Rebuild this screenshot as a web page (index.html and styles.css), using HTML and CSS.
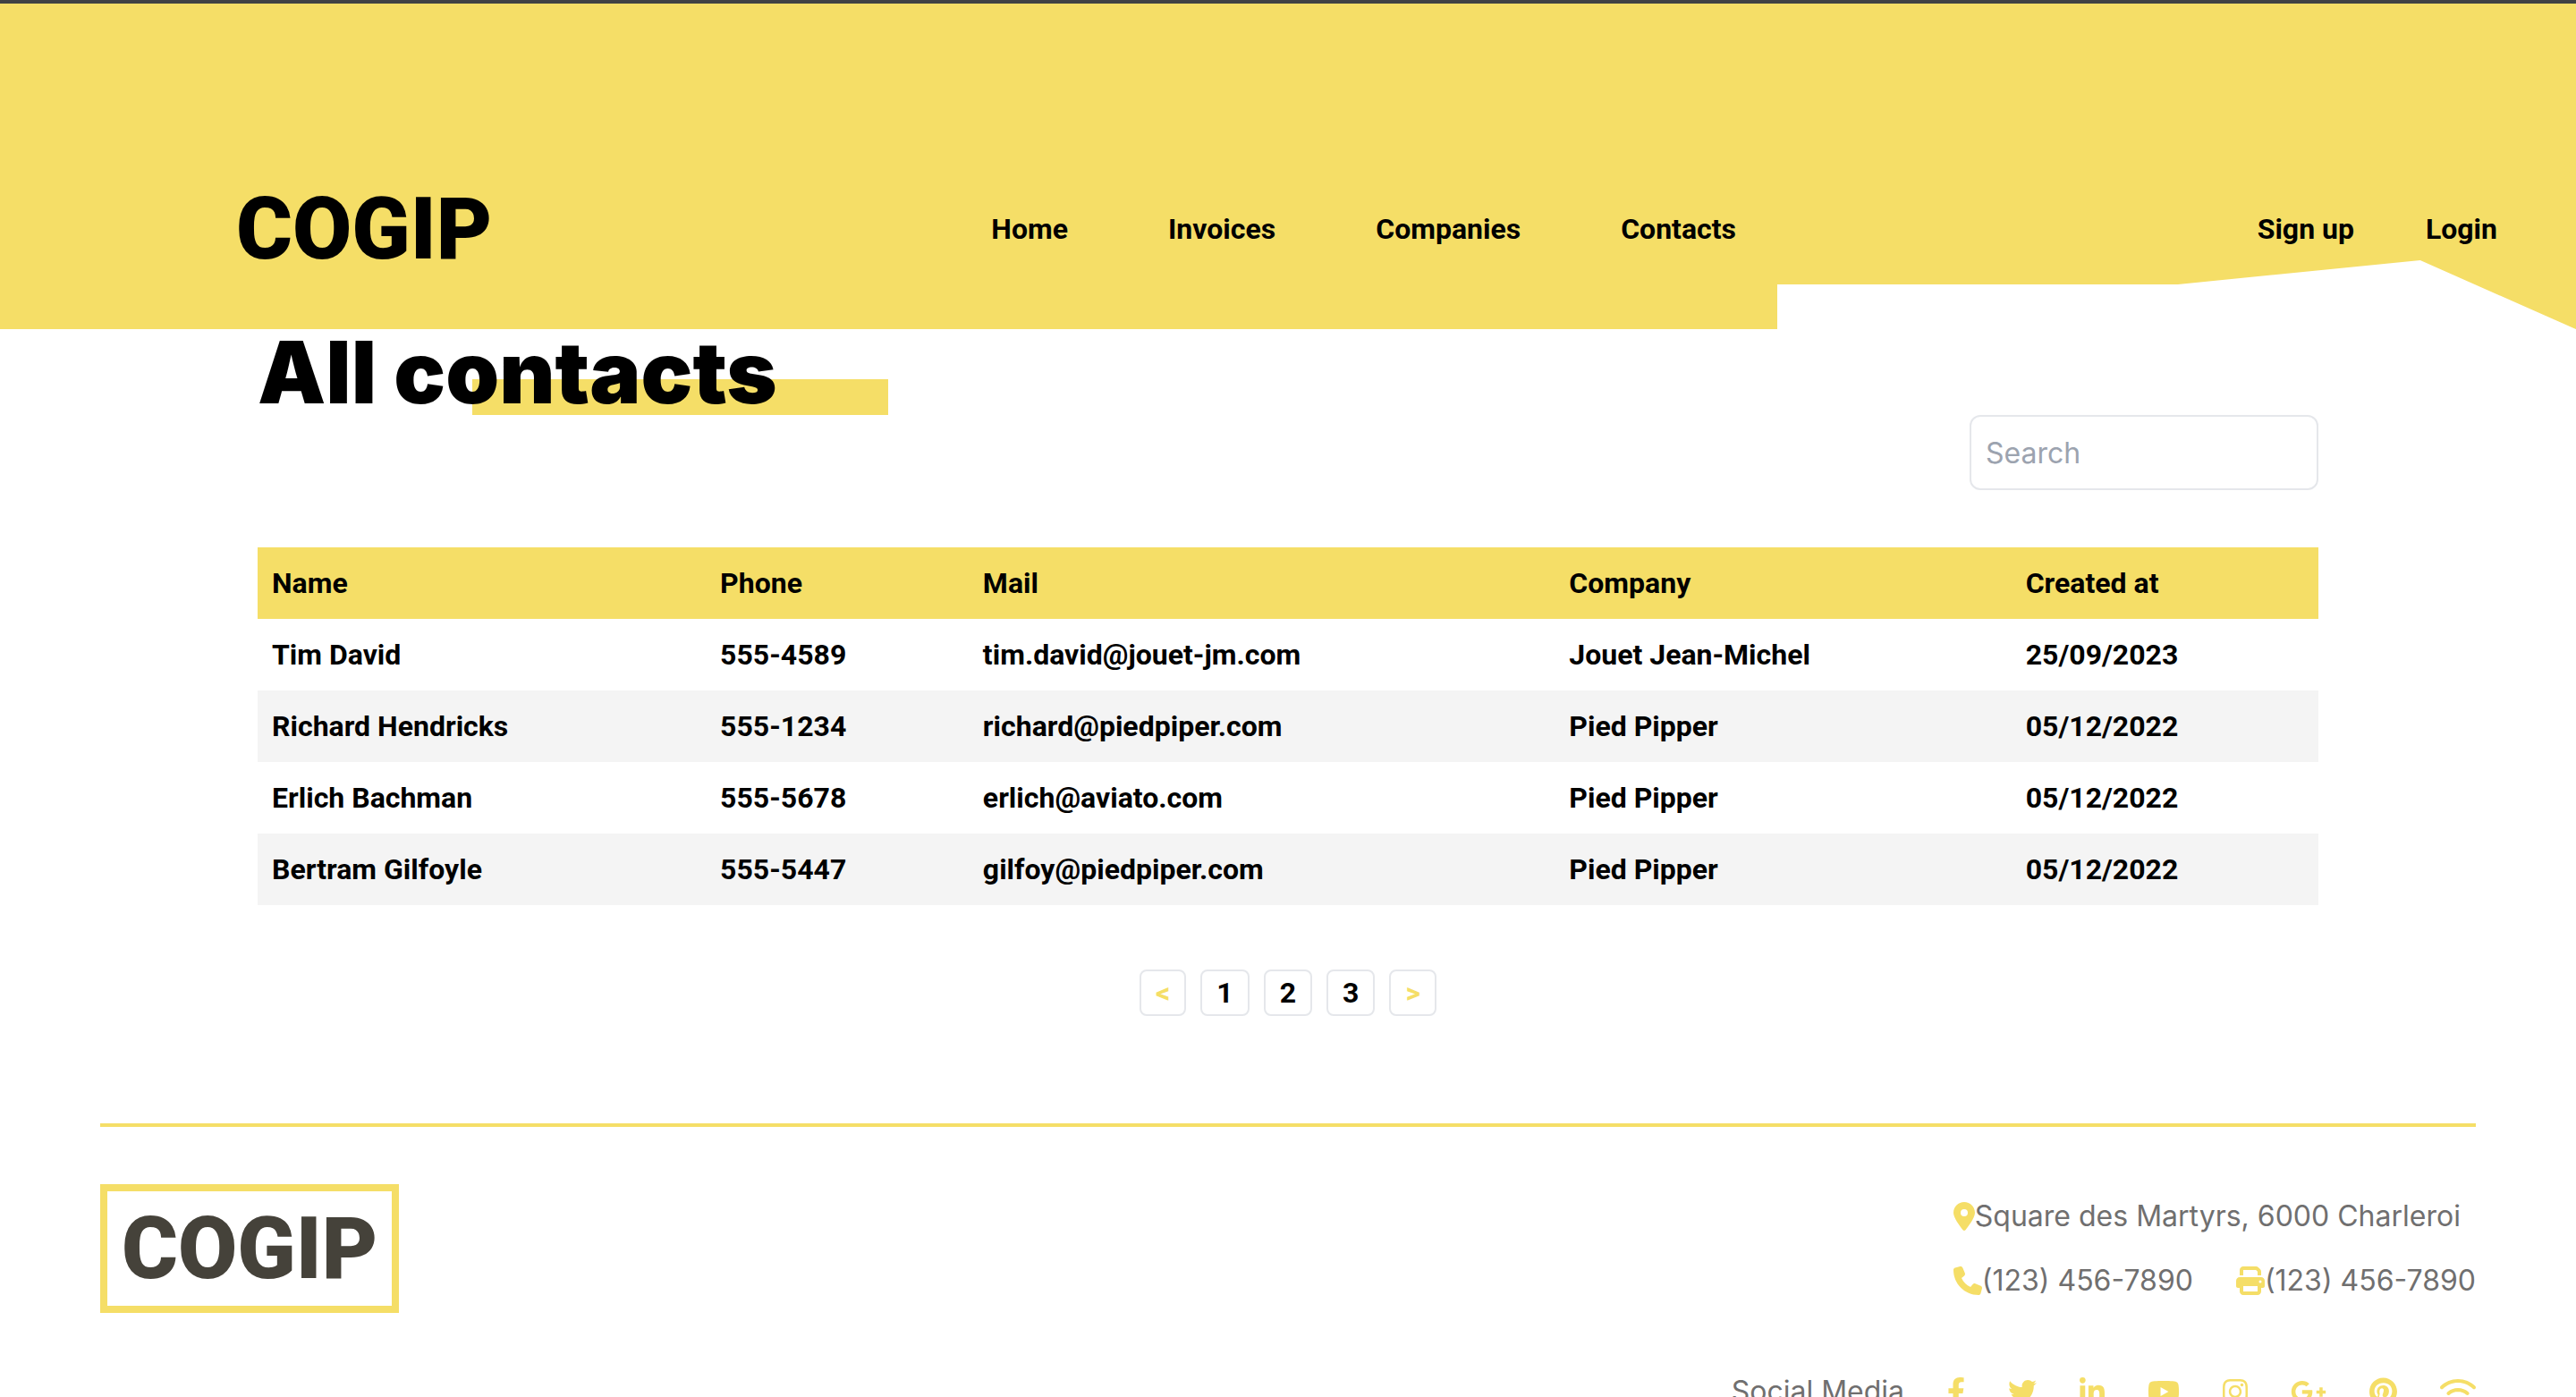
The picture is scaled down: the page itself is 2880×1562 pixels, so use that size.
FILE: index.html
```html
<!DOCTYPE html>
<html lang="en">
<head>
<meta charset="utf-8">
<title>COGIP - All contacts</title>
<link rel="stylesheet" href="styles.css">
</head>
<body>
<header class="header">
  <svg class="header-shape" viewBox="0 0 893 77" preserveAspectRatio="none" aria-hidden="true"><path fill="#fff" d="M0 27H448L719 0 893 77H0z"/></svg>
  <a class="brand" href="#">COGIP</a>
  <nav class="menu">
    <a href="#">Home</a>
    <a href="#">Invoices</a>
    <a href="#">Companies</a>
    <a href="#">Contacts</a>
  </nav>
  <nav class="account">
    <a href="#">Sign up</a>
    <a href="#">Login</a>
  </nav>
</header>
<main class="content">
  <h1 class="title">All contacts</h1>
  <div class="search-row">
    <input class="search" type="search" placeholder="Search" aria-label="Search">
  </div>
  <table class="contacts">
    <colgroup><col class="col-name"><col class="col-phone"><col class="col-mail"><col class="col-company"><col class="col-date"></colgroup>
    <thead>
      <tr><th>Name</th><th>Phone</th><th>Mail</th><th>Company</th><th>Created at</th></tr>
    </thead>
    <tbody>
      <tr><td>Tim David</td><td>555-4589</td><td>tim.david@jouet-jm.com</td><td>Jouet Jean-Michel</td><td>25/09/2023</td></tr>
      <tr><td>Richard Hendricks</td><td>555-1234</td><td>richard@piedpiper.com</td><td>Pied Pipper</td><td>05/12/2022</td></tr>
      <tr><td>Erlich Bachman</td><td>555-5678</td><td>erlich@aviato.com</td><td>Pied Pipper</td><td>05/12/2022</td></tr>
      <tr><td>Bertram Gilfoyle</td><td>555-5447</td><td>gilfoy@piedpiper.com</td><td>Pied Pipper</td><td>05/12/2022</td></tr>
    </tbody>
  </table>
  <div class="pages">
    <button class="page arrow" type="button">&lt;</button>
    <button class="page" type="button">1</button>
    <button class="page" type="button">2</button>
    <button class="page" type="button">3</button>
    <button class="page arrow" type="button">&gt;</button>
  </div>
</main>
<footer class="footer">
  <div class="footer-top">
    <a class="footer-brand" href="#">COGIP</a>
    <address class="address">
      <span class="item"><svg class="icon" viewBox="0 0 384 512"><path d="M215.700 499.200C267 435 384 279.400 384 192C384 86 298 0 192 0S0 86 0 192c0 87.400 117 243 168.300 307.200c12.300 15.300 35.100 15.300 47.400 0zM192 128a64 64 0 1 1 0 128 64 64 0 1 1 0-128z"/></svg>Square des Martyrs, 6000 Charleroi</span>
      <span class="phones">
        <span class="item"><svg class="icon" viewBox="0 0 512 512"><path d="M164.900 24.600c-7.700-18.600-28-28.500-47.400-23.200l-88 24C12.100 30.200 0 46 0 64C0 311.400 200.600 512 448 512c18 0 33.800-12.100 38.600-29.500l24-88c5.300-19.400-4.600-39.700-23.200-47.400l-96-40c-16.300-6.800-35.200-2.100-46.300 11.600L304.700 368C234.300 334.700 177.300 277.700 144 207.300L193.300 167c13.700-11.200 18.400-30 11.600-46.300l-40-96z"/></svg>(123) 456-7890</span>
        <span class="item"><svg class="icon" viewBox="0 0 512 512"><path d="M128 0C92.700 0 64 28.700 64 64v96h64V64H354.700L384 93.300V160h64V93.300c0-17-6.700-33.300-18.700-45.300L400 18.700C388 6.700 371.700 0 354.700 0H128zM384 352v32 64H128V384 368 352H384zm64 32h32c17.700 0 32-14.300 32-32V256c0-35.300-28.700-64-64-64H64c-35.300 0-64 28.700-64 64v96c0 17.700 14.300 32 32 32H64v64c0 35.300 28.700 64 64 64H384c35.300 0 64-28.700 64-64V384zM432 248a24 24 0 1 1 0 48 24 24 0 1 1 0-48z"/></svg>(123) 456-7890</span>
      </span>
    </address>
  </div>
  <div class="social">
    <span>Social Media</span>
    <a href="#" aria-label="Facebook"><svg class="icon" viewBox="0 0 320 512"><path d="M279.140 288l14.220-92.660h-88.910v-60.130c0-25.350 12.420-50.060 52.240-50.060h40.420V6.260S260.430 0 225.360 0c-73.220 0-121.080 44.380-121.080 124.720v70.620H22.890V288h81.390v224h100.170V288z"/></svg></a>
    <a href="#" aria-label="Twitter"><svg class="icon" viewBox="0 0 512 512"><path d="M459.370 151.716c.325 4.548.325 9.097.325 13.645 0 138.720-105.583 298.558-298.558 298.558-59.452 0-114.680-17.219-161.137-47.106 8.447.974 16.568 1.299 25.340 1.299 49.055 0 94.213-16.568 130.274-44.832-46.132-.975-84.792-31.188-98.112-72.772 6.498.974 12.995 1.624 19.818 1.624 9.421 0 18.843-1.300 27.614-3.573-48.081-9.747-84.143-51.980-84.143-102.985v-1.299c13.969 7.797 30.214 12.670 47.431 13.319-28.264-18.843-46.781-51.005-46.781-87.391 0-19.492 5.197-37.360 14.294-52.954 51.655 63.675 129.300 105.258 216.365 109.807-1.624-7.797-2.599-15.918-2.599-24.040 0-57.828 46.782-104.934 104.934-104.934 30.213 0 57.502 12.670 76.670 33.137 23.715-4.548 46.456-13.320 66.599-25.340-7.798 24.366-24.366 44.833-46.132 57.827 21.117-2.273 41.584-8.122 60.426-16.243-14.292 20.791-32.161 39.308-52.628 54.253z"/></svg></a>
    <a href="#" aria-label="LinkedIn"><svg class="icon" viewBox="0 0 448 512"><path d="M100.280 448H7.400V148.900h92.880zM53.790 108.100C24.090 108.100 0 83.500 0 53.800a53.790 53.790 0 0 1 107.580 0c0 29.700-24.100 54.300-53.790 54.300zM447.900 448h-92.680V302.400c0-34.700-.7-79.200-48.290-79.200-48.290 0-55.690 37.700-55.690 76.700V448h-92.780V148.900h89.080v40.800h1.300c12.400-23.500 42.690-48.300 87.880-48.300 94 0 111.280 61.900 111.280 142.300V448z"/></svg></a>
    <a href="#" aria-label="YouTube"><svg class="icon" viewBox="0 0 576 512"><path d="M549.655 124.083c-6.281-23.650-24.787-42.276-48.284-48.597C458.781 64 288 64 288 64S117.220 64 74.629 75.486c-23.497 6.322-42.003 24.947-48.284 48.597-11.412 42.867-11.412 132.305-11.412 132.305s0 89.438 11.412 132.305c6.281 23.650 24.787 41.500 48.284 47.821C117.220 448 288 448 288 448s170.780 0 213.371-11.486c23.497-6.321 42.003-24.171 48.284-47.821 11.412-42.867 11.412-132.305 11.412-132.305s0-89.438-11.412-132.305zm-317.510 213.508V175.185l142.739 81.205-142.739 81.201z"/></svg></a>
    <a href="#" aria-label="Instagram"><svg class="icon" viewBox="0 0 448 512"><path d="M224.100 141c-63.600 0-114.900 51.300-114.900 114.900s51.300 114.900 114.900 114.900S339 319.500 339 255.900 287.700 141 224.100 141zm0 189.600c-41.100 0-74.700-33.500-74.700-74.700s33.500-74.700 74.700-74.700 74.700 33.500 74.700 74.700-33.600 74.700-74.700 74.700zm146.400-194.300c0 14.900-12 26.800-26.800 26.800-14.900 0-26.800-12-26.800-26.800s12-26.800 26.800-26.800 26.800 12 26.800 26.800zm76.100 27.200c-1.700-35.900-9.900-67.700-36.200-93.900-26.200-26.200-58-34.400-93.900-36.200-37-2.100-147.900-2.100-184.900 0-35.800 1.700-67.600 9.900-93.900 36.100s-34.400 58-36.200 93.900c-2.100 37-2.100 147.900 0 184.900 1.700 35.900 9.900 67.700 36.200 93.900s58 34.400 93.900 36.200c37 2.100 147.900 2.100 184.900 0 35.900-1.700 67.700-9.900 93.900-36.200 26.200-26.200 34.400-58 36.200-93.900 2.100-37 2.100-147.800 0-184.800zM398.800 388c-7.800 19.600-22.900 34.700-42.600 42.600-29.500 11.700-99.500 9-132.100 9s-102.700 2.600-132.100-9c-19.600-7.800-34.700-22.900-42.600-42.600-11.700-29.500-9-99.500-9-132.100s-2.600-102.700 9-132.100c7.800-19.600 22.900-34.700 42.600-42.600 29.500-11.700 99.500-9 132.100-9s102.700-2.600 132.100 9c19.600 7.800 34.700 22.900 42.600 42.600 11.700 29.500 9 99.500 9 132.100s2.700 102.700-9 132.100z"/></svg></a>
    <a href="#" aria-label="Google Plus"><svg class="icon" viewBox="0 0 640 512"><path d="M386.061 228.496c1.834 9.692 3.143 19.384 3.143 31.956C389.204 370.205 315.599 448 204.800 448c-106.084 0-192-85.915-192-192s85.916-192 192-192c51.864 0 95.083 18.859 128.611 50.292l-52.126 50.030c-14.145-13.621-39.028-29.599-76.485-29.599-65.484 0-118.920 54.221-118.920 121.277 0 67.056 53.436 121.277 118.920 121.277 75.961 0 104.513-54.745 108.965-82.773H204.800v-66.009h181.261zm185.406 6.437V179.200h-56.001v55.733h-55.733v56.001h55.733v55.733h56.001v-55.733H627.200v-56.001h-55.733z"/></svg></a>
    <a href="#" aria-label="Pinterest"><svg class="icon" viewBox="0 0 496 512"><path d="M496 256c0 137-111 248-248 248-25.600 0-50.200-3.900-73.400-11.100 10.100-16.500 25.200-43.500 30.800-65 3-11.600 15.400-59 15.400-59 8.100 15.400 31.700 28.500 56.800 28.500 74.800 0 128.700-68.800 128.700-154.300 0-81.900-66.900-143.200-152.900-143.200-107 0-163.900 71.800-163.900 150.100 0 36.400 19.400 81.700 50.300 96.100 4.700 2.200 7.200 1.200 8.300-3.300.8-3.400 5-20.300 6.900-28.100.6-2.500.3-4.700-1.700-7.100-10.100-12.500-18.300-35.300-18.300-56.600 0-54.700 41.400-107.600 112-107.600 60.900 0 103.600 41.500 103.600 100.900 0 67.100-33.900 113.600-78 113.600-24.300 0-42.600-20.100-36.700-44.800 7-29.500 20.500-61.300 20.500-82.600 0-19-10.200-34.900-31.400-34.900-24.900 0-44.900 25.700-44.900 60.200 0 22 7.400 36.800 7.400 36.800s-24.500 103.800-29 123.200c-5 21.400-3 51.600-.9 71.200C65.400 450.900 0 361.100 0 256 0 119 111 8 248 8s248 111 248 248z"/></svg></a>
    <a href="#" aria-label="Wifi"><svg class="icon" viewBox="0 0 640 512"><path d="M54.200 202.900C123.200 136.700 216.800 96 320 96s196.800 40.700 265.800 106.900c12.800 12.200 33 11.800 45.200-.9s11.800-33-.9-45.200C549.700 79.500 440.400 32 320 32S90.300 79.500 9.800 156.700C-2.900 169-3.300 189.200 8.900 202s32.500 13.200 45.200 .9zM320 256c56.800 0 108.600 21.100 148.200 56c13.300 11.700 33.500 10.400 45.200-2.800s10.400-33.500-2.800-45.200C459.800 219.200 393 192 320 192s-139.800 27.200-190.500 72c-13.300 11.700-14.500 31.900-2.800 45.200s31.900 14.500 45.200 2.800c39.500-34.900 91.300-56 148.200-56zm64 160a64 64 0 1 0 -128 0 64 64 0 1 0 128 0z"/></svg></a>
  </div>
</footer>
</body>
</html>
```
FILE: styles.css
```css
* {
  box-sizing: border-box;
}

body {
  margin: 0;
  background: #fff;
  color: #000;
  font-family: Inter, "Liberation Sans", sans-serif;
  font-size: 32px;
  line-height: 48px;
}

a {
  color: inherit;
  text-decoration: none;
}

.header {
  position: relative;
  display: grid;
  grid-template-columns: 33.4% 1fr auto;
  align-items: center;
  height: 368px;
  padding: 140px 88px 0 264px;
  border-top: 4px solid #404244;
  background: #f5de67;
  font-family: Roboto, "Liberation Sans", sans-serif;
  font-weight: 700;
}

.header-shape {
  position: absolute;
  right: 0;
  bottom: 0;
  width: 31%;
  height: 77px;
}

.brand,
.menu,
.account {
  position: relative;
}

.brand,
.footer-brand {
  font-family: Roboto, "Liberation Sans", sans-serif;
  font-size: 96px;
  font-weight: 900;
  line-height: 96px;
}

.menu {
  display: flex;
  gap: 112px;
}

.account {
  display: flex;
  gap: 80px;
}

.content {
  width: 80%;
  margin: 0 auto;
}

.title {
  width: max-content;
  margin: 0;
  padding-right: 124px;
  background: linear-gradient(#f5de67, #f5de67) 240px 56px / 100% 40px no-repeat;
  font-size: 96px;
  font-weight: 900;
  line-height: 96px;
}

.search-row {
  display: flex;
  justify-content: flex-end;
}

.search {
  width: 390px;
  height: 84px;
  padding: 0 16px;
  border: 2px solid #e5e7eb;
  border-radius: 12px;
  background: #fff;
  font: inherit;
}

.search::placeholder {
  color: #9ca3af;
  opacity: 1;
}

.contacts {
  width: 100%;
  margin-top: 64px;
  border-collapse: collapse;
  table-layout: fixed;
  font-family: Roboto, "Liberation Sans", sans-serif;
  font-weight: 700;
}

.contacts th,
.contacts td {
  height: 80px;
  padding: 0 16px;
  text-align: left;
}

.contacts thead {
  background: #f5de67;
}

.contacts tbody tr:nth-child(even) {
  background: #f4f4f4;
}

.col-name { width: 21.75%; }
.col-phone { width: 12.75%; }
.col-mail { width: 28.45%; }
.col-company { width: 22.15%; }

.pages {
  display: flex;
  justify-content: center;
  gap: 16px;
  margin-top: 72px;
}

.page {
  height: 52px;
  padding: 0 16px;
  border: 2px solid #e5e7eb;
  border-radius: 8px;
  background: #fff;
  color: #000;
  font: 700 32px/48px Roboto, "Liberation Sans", sans-serif;
}

.arrow {
  color: #f5de67;
}

.footer {
  margin: 120px 112px 0;
  border-top: 4px solid #f5de67;
  padding-top: 64px;
  color: #706f6f;
}

.footer-top {
  display: flex;
  justify-content: space-between;
  align-items: center;
}

.footer-brand {
  padding: 16px;
  border: 8px solid #f5de67;
  color: #45423a;
}

.address {
  display: grid;
  gap: 24px;
  font-style: normal;
}

.phones {
  display: flex;
  gap: 48px;
}

.item {
  display: flex;
  align-items: center;
}

.icon {
  display: block;
  height: 32px;
  fill: #f5de67;
}

.social {
  display: flex;
  justify-content: flex-end;
  align-items: center;
  gap: 48px;
  margin-top: 64px;
}
```
